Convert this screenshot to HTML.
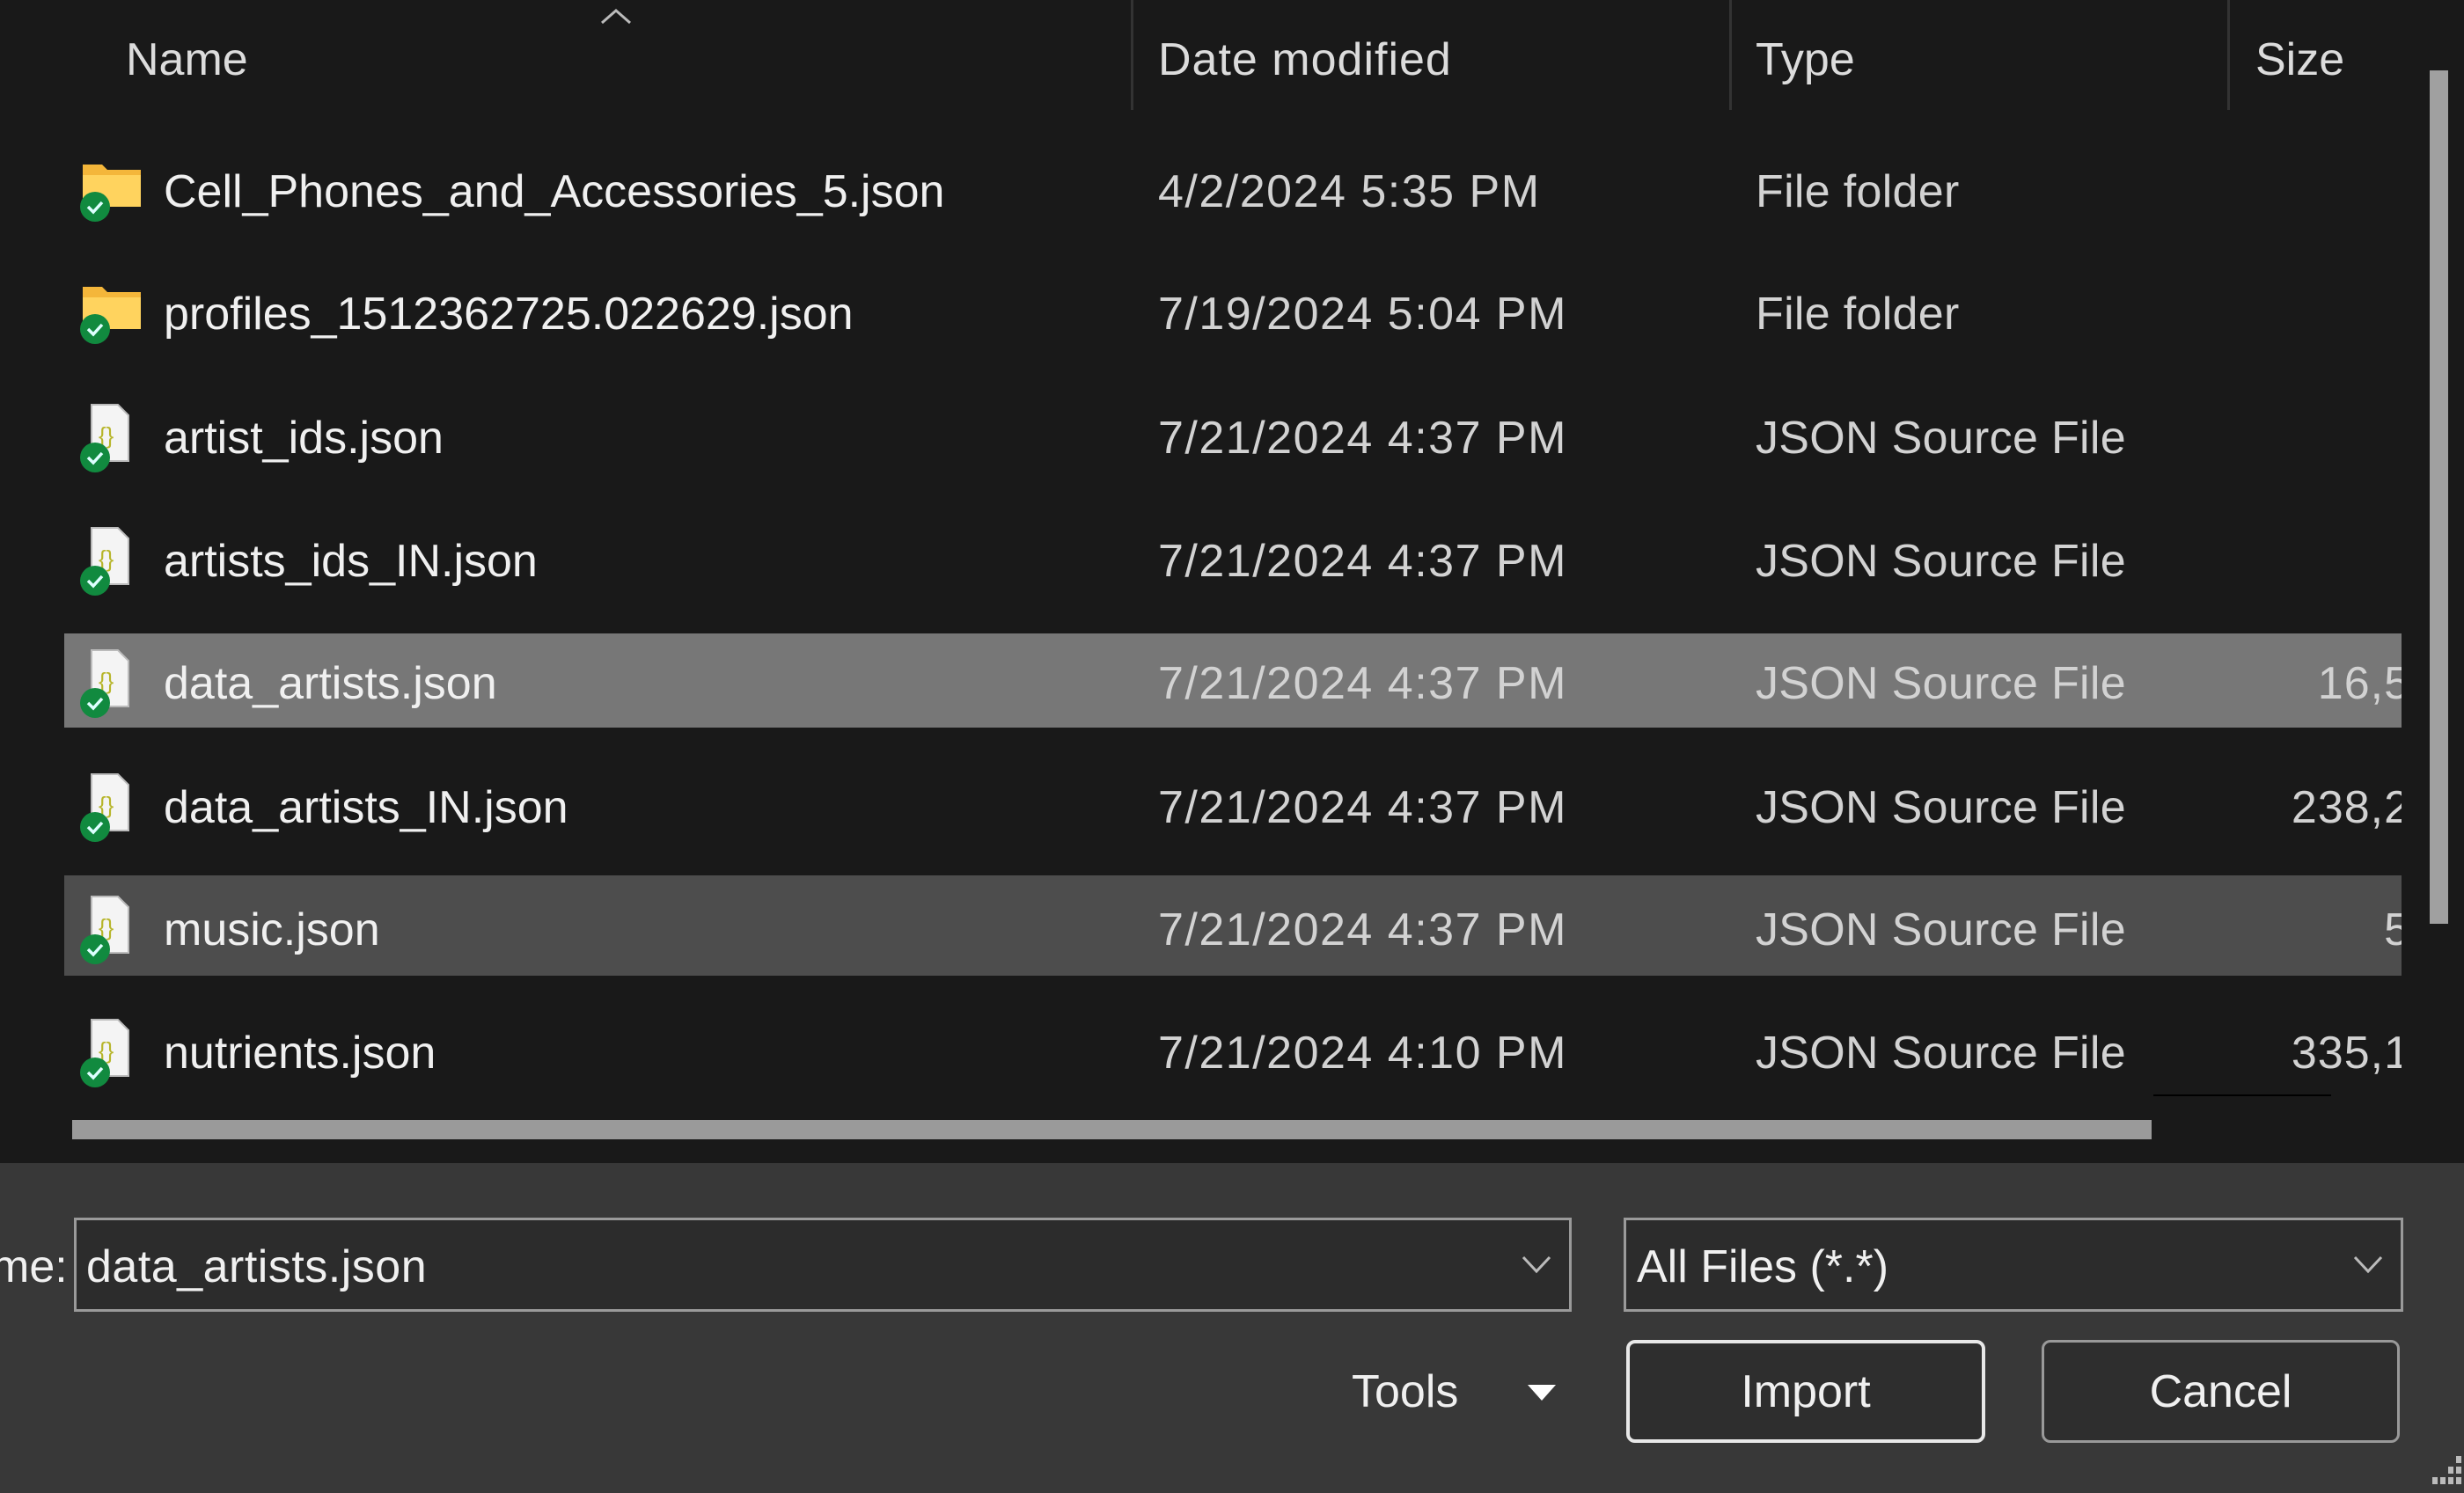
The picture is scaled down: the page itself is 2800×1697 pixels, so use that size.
<!DOCTYPE html>
<html><head><style>
*{margin:0;padding:0;box-sizing:border-box}
body{width:2800px;height:1697px;background:#191919;position:relative;overflow:hidden;font-family:"Liberation Sans",sans-serif;color:#e8e8e8}
.a{position:absolute;white-space:nowrap}
.h{top:38px;font-size:52px;color:#dcdcdc}
.div{position:absolute;top:0;width:3px;height:125px;background:#333}
.t{position:absolute;font-size:52px;line-height:60px}
.n{left:186px;color:#f0f0f0;letter-spacing:0px}
.d{left:1316px;color:#d2d2d2;letter-spacing:1.5px}
.ty{left:1995px;color:#d2d2d2;letter-spacing:0.3px}
.ic{position:absolute;left:90px}
.clip{position:absolute;left:0;top:0;width:2729px;height:1320px;overflow:hidden}
</style></head><body>
<div class="clip">
<div class="a h" style="left:143px">Name</div>
<div class="a h" style="left:1316px;letter-spacing:1px">Date modified</div>
<div class="a h" style="left:1995px">Type</div>
<div class="a h" style="left:2563px">Size</div>
<svg class="a" style="left:680px;top:6px" width="40" height="24"><path d="M4 20 L20 6 L36 20" stroke="#bbb" stroke-width="3" fill="none"/></svg>
<div class="div" style="left:1285px"></div><div class="div" style="left:1965px"></div><div class="div" style="left:2531px"></div>

<div class="a" style="left:73px;top:720px;width:2656px;height:107px;background:#777"></div>
<div class="a" style="left:73px;top:995px;width:2656px;height:114px;background:#4d4d4d"></div>
</div>

<div id="rows"></div>
<script>
const rows=[["Cell_Phones_and_Accessories_5.json","4/2/2024 5:35 PM","File folder","",1],
["profiles_1512362725.022629.json","7/19/2024 5:04 PM","File folder","",1],
["artist_ids.json","7/21/2024 4:37 PM","JSON Source File","",0],
["artists_ids_IN.json","7/21/2024 4:37 PM","JSON Source File","",0],
["data_artists.json","7/21/2024 4:37 PM","JSON Source File","16,5",0],
["data_artists_IN.json","7/21/2024 4:37 PM","JSON Source File","238,2",0],
["music.json","7/21/2024 4:37 PM","JSON Source File","5",0],
["nutrients.json","7/21/2024 4:10 PM","JSON Source File","335,1",0]];
const cy=[218,357,498,638,777,918,1057,1197];
let h='';
rows.forEach((r,i)=>{
 const top=cy[i]-30;
 let icon;
 if(r[4]){icon=`<svg class="ic" style="top:${cy[i]-35}px" width="80" height="70"><path d="M4 4 h22 l6 6 h38 v42 h-66z" fill="#f4b63a"/><path d="M4 16 h66 v36 h-66z" fill="#ffd35e"/><circle cx="18" cy="52" r="17" fill="#118a3f"/><path d="M10 52 l6 6 l10 -11" stroke="#dff" stroke-width="3.5" fill="none"/></svg>`;}
 else{icon=`<svg class="ic" style="top:${cy[i]-40}px" width="80" height="80"><path d="M14 2 h30 l12 12 v52 h-42z" fill="#f4f4f4" stroke="#bbb" stroke-width="2"/><text x="22" y="46" font-size="26" fill="#b7b52a" font-family="Liberation Sans">{}</text><circle cx="18" cy="62" r="17" fill="#118a3f"/><path d="M10 62 l6 6 l10 -11" stroke="#dff" stroke-width="3.5" fill="none"/></svg>`;}
 h+=icon+`<div class="a t n" style="top:${top}px">${r[0]}</div><div class="a t d" style="top:${top}px">${r[1]}</div><div class="a t ty" style="top:${top}px">${r[2]}</div>`;
 if(r[3]) h+=`<div class="a" style="left:2500px;top:${top}px;width:229px;height:60px;overflow:hidden"><div class="t" style="right:-10px;top:0;color:#d2d2d2;letter-spacing:1px">${r[3]}</div></div>`;
});
document.getElementById('rows').innerHTML=h;
</script>
<div class="a" style="left:2447px;top:1244px;width:202px;height:2px;background:#000"></div>
<div class="a" style="left:82px;top:1273px;width:2363px;height:22px;background:#9a9a9a"></div>
<div class="a" style="left:2761px;top:80px;width:21px;height:970px;background:#a0a0a0"></div>

<div class="a" style="left:0;top:1322px;width:2800px;height:375px;background:#383838"></div>
<div class="a" style="left:-10px;top:1410px;font-size:52px;color:#f0f0f0">me:</div>
<div class="a" style="left:84px;top:1384px;width:1702px;height:107px;background:#2c2c2c;border:3px solid #9a9a9a"></div>
<div class="a" style="left:98px;top:1410px;font-size:52px;color:#f0f0f0;letter-spacing:0.5px">data_artists.json</div>
<svg class="a" style="left:1728px;top:1425px" width="36" height="24"><path d="M3 4 L18 20 L33 4" stroke="#bbb" stroke-width="3" fill="none"/></svg>
<div class="a" style="left:1845px;top:1384px;width:886px;height:107px;background:#2c2c2c;border:3px solid #9a9a9a"></div>
<div class="a" style="left:1860px;top:1410px;font-size:52px;color:#f0f0f0">All Files (*.*)</div>
<svg class="a" style="left:2673px;top:1425px" width="36" height="24"><path d="M3 4 L18 20 L33 4" stroke="#bbb" stroke-width="3" fill="none"/></svg>
<div class="a" style="left:1536px;top:1552px;font-size:52px;color:#f0f0f0">Tools</div>
<svg class="a" style="left:1734px;top:1572px" width="36" height="24"><path d="M2 2 H34 L18 20z" fill="#fff"/></svg>
<div class="a" style="left:1848px;top:1523px;width:408px;height:117px;border:4px solid #e8e8e8;border-radius:10px;background:#2e2e2e"></div>
<div class="a" style="left:1848px;top:1552px;width:408px;text-align:center;font-size:52px;color:#f0f0f0">Import</div>
<div class="a" style="left:2320px;top:1523px;width:407px;height:117px;border:3px solid #999;border-radius:10px;background:#2e2e2e"></div>
<div class="a" style="left:2320px;top:1552px;width:407px;text-align:center;font-size:52px;color:#f0f0f0">Cancel</div>
<svg class="a" style="left:2760px;top:1655px" width="40" height="42"><g fill="#bbb"><rect x="31" y="0" width="6" height="8"/><rect x="31" y="12" width="6" height="8"/><rect x="22" y="12" width="6" height="8"/><rect x="31" y="24" width="6" height="8"/><rect x="22" y="24" width="6" height="8"/><rect x="13" y="24" width="6" height="8"/><rect x="4" y="24" width="6" height="8"/></g></svg>
</body></html>
